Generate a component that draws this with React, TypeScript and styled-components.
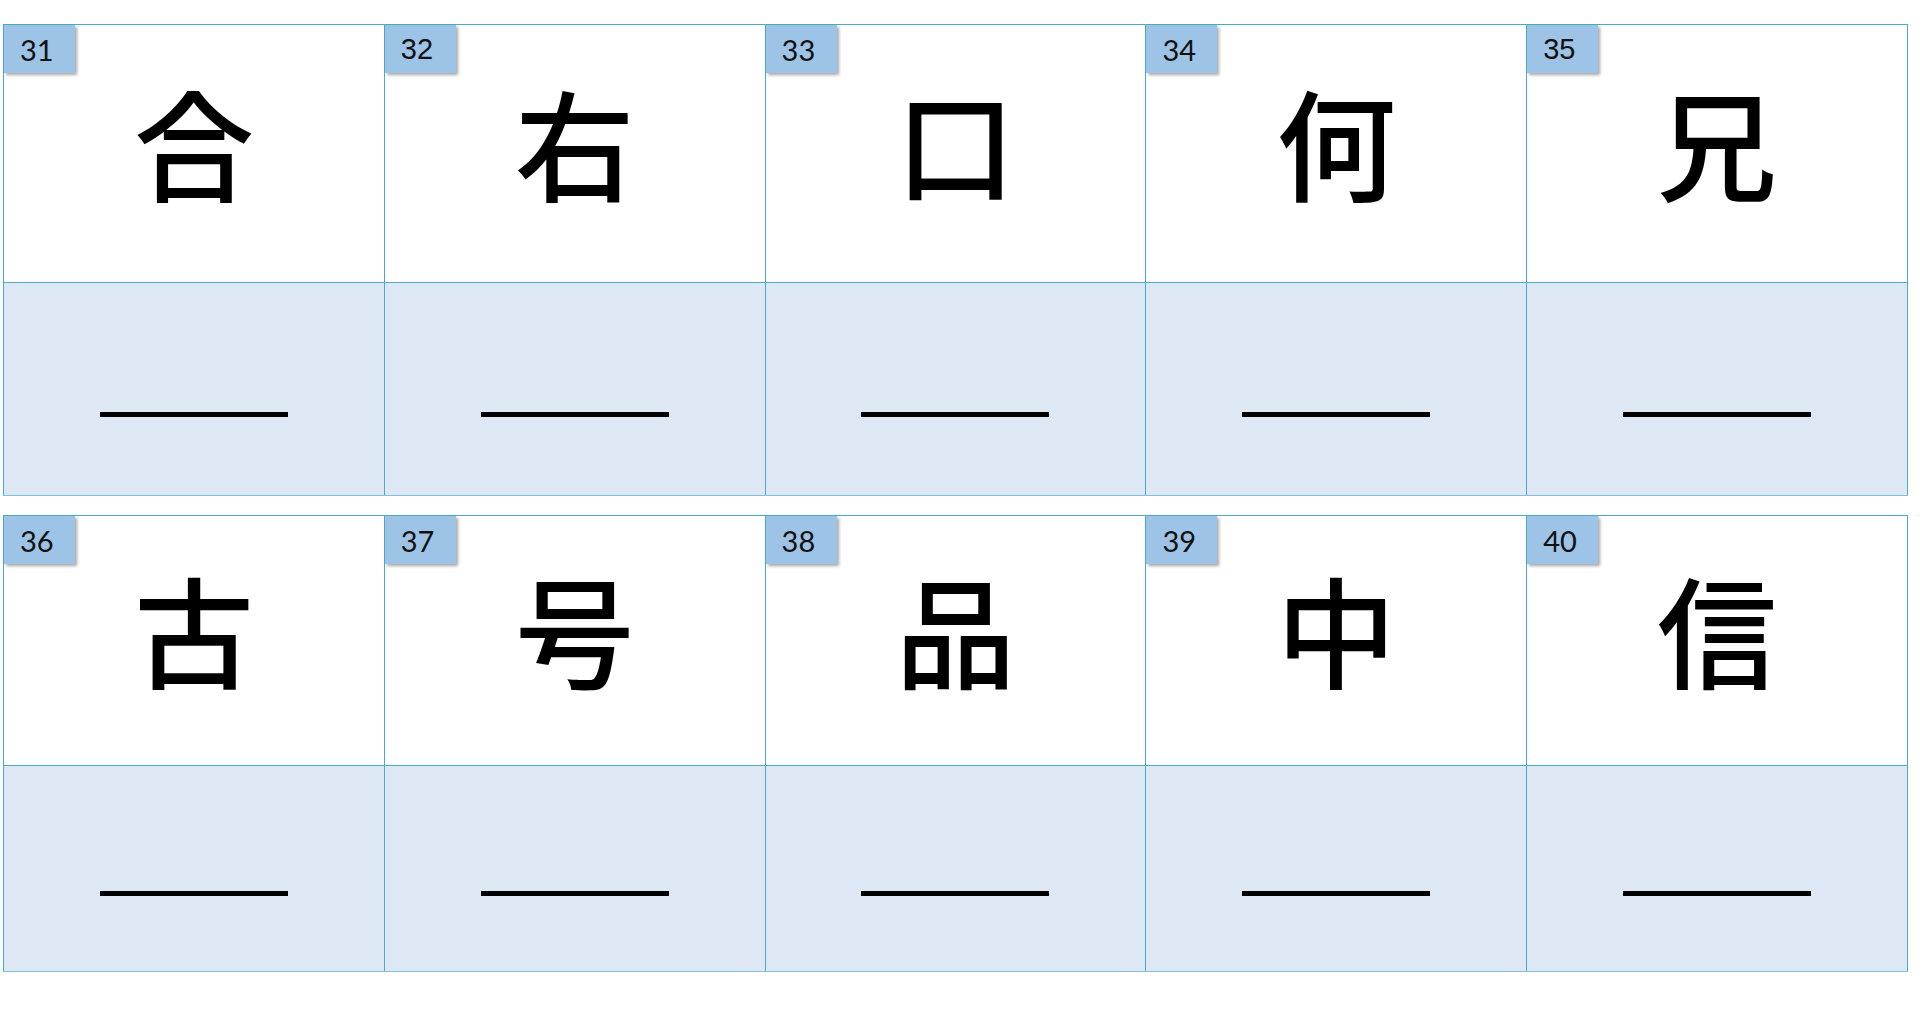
import styled, { createGlobalStyle } from 'styled-components';

const GlobalStyle = createGlobalStyle`
  html, body {
    margin: 0;
    padding: 0;
    background: #ffffff;
  }
  body {
    font-family: 'Liberation Sans', Arial, sans-serif;
  }
`;

const Sheet = styled.div`
  display: flex;
  flex-direction: column;
  gap: 19px;
  width: 1905px;
  padding: 24px 0 0 3px;
`;

const Grid = styled.div`
  display: grid;
  grid-template-columns: repeat(5, 1fr);
  border-top: 1px solid #4bacc6;
  border-left: 1px solid #4bacc6;
  border-bottom: 1px solid #7fc2d6;
`;

const Card = styled.div`
  display: flex;
  flex-direction: column;
  position: relative;
  border-right: 1px solid #4bacc6;
`;

const WordCell = styled.div<{ $h: number }>`
  display: flex;
  align-items: center;
  justify-content: center;
  height: ${(p) => p.$h}px;
  padding-bottom: 26px;
  box-sizing: border-box;
  background: #ffffff;
  border-bottom: 1px solid #4bacc6;
  font-family: 'Noto Sans CJK JP', 'Noto Sans CJK SC', sans-serif;
  font-weight: 500;
  font-size: 120px;
  line-height: 1;
  color: #000000;
`;

const AnswerCell = styled.div<{ $h: number }>`
  display: flex;
  align-items: center;
  justify-content: center;
  height: ${(p) => p.$h}px;
  padding-top: 50px;
  box-sizing: border-box;
  background: #dde8f4;
`;

const Blank = styled.span`
  display: block;
  width: 188px;
  height: 0;
  border-bottom: 5px solid #000000;
`;

const Badge = styled.div<{ $plain?: boolean }>`
  position: absolute;
  top: 0;
  left: 0;
  width: 71px;
  height: 48px;
  box-sizing: border-box;
  padding-left: 16px;
  display: flex;
  align-items: center;
  background: #9dc3e6;
  box-shadow: 2px 2px 3px rgba(0, 0, 0, 0.35);
  font-family: ${(p) => (p.$plain ? "'Liberation Sans', Arial" : "'Lato', 'DejaVu Sans'")}, sans-serif;
  font-size: 29px;
  color: #111111;
`;

type Item = { n: number; ch: string; plain?: boolean };

const rows: { top: number; bottom: number; items: Item[] }[] = [
  {
    top: 258,
    bottom: 212,
    items: [
      { n: 31, ch: '合' },
      { n: 32, ch: '右', plain: true },
      { n: 33, ch: '口' },
      { n: 34, ch: '何' },
      { n: 35, ch: '兄', plain: true },
    ],
  },
  {
    top: 250,
    bottom: 205,
    items: [
      { n: 36, ch: '古' },
      { n: 37, ch: '号' },
      { n: 38, ch: '品' },
      { n: 39, ch: '中' },
      { n: 40, ch: '信' },
    ],
  },
];

export default function App() {
  return (
    <>
      <GlobalStyle />
      <Sheet>
        {rows.map((row) => (
          <Grid key={row.items[0].n}>
            {row.items.map((it) => (
              <Card key={it.n}>
                <WordCell $h={row.top}>{it.ch}</WordCell>
                <AnswerCell $h={row.bottom}>
                  <Blank />
                </AnswerCell>
                <Badge $plain={it.plain}>{it.n}</Badge>
              </Card>
            ))}
          </Grid>
        ))}
      </Sheet>
    </>
  );
}
